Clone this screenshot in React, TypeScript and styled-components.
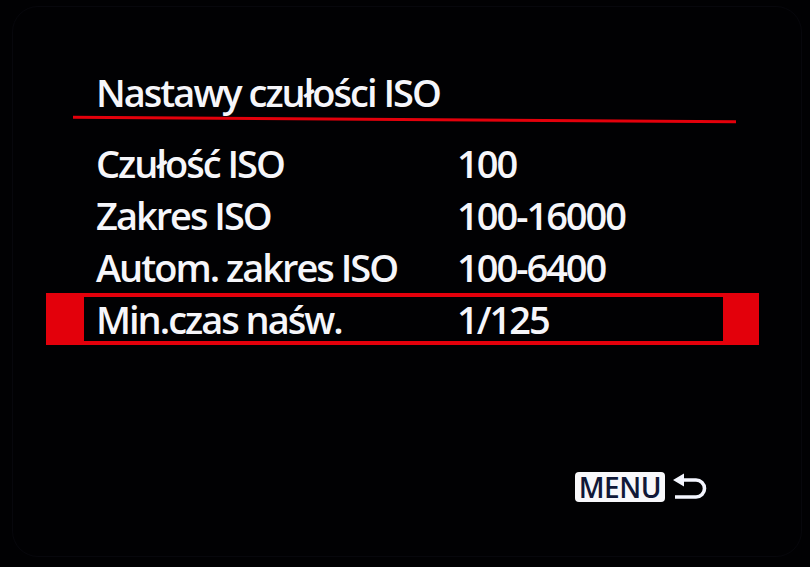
import styled, { createGlobalStyle } from "styled-components"

const GlobalStyle = createGlobalStyle`
    html, body {
        margin: 0;
        padding: 0;
        background: #000;
    }
`

const Screen = styled.div`
    width: 810px;
    height: 567px;
    box-sizing: border-box;
    padding: 6px 8px 10px 12px;
    background: #010103;
    font-family: "Open Sans", "Noto Sans", sans-serif;
    font-stretch: 88%;
    color: #f6f6fa;
    overflow: hidden;
`

const Bezel = styled.div`
    height: 100%;
    box-sizing: border-box;
    border: 1px solid #07070c;
    border-radius: 26px;
    display: flex;
    flex-direction: column;
    padding-top: 61px;
`

const Title = styled.h1`
    margin: 0 0 2px 83px;
    font-size: 38px;
    font-weight: 600;
    line-height: 48px;
    letter-spacing: -2px;
`

const Rule = styled.div`
    margin: 0 0 0 60px;
    width: 663px;
    height: 3px;
    background: #e3000b;
    transform: rotate(0.4deg);
`

const List = styled.div`
    margin-top: 16px;
    display: flex;
    flex-direction: column;
`

const Row = styled.div<{ selected?: boolean }>`
    margin-left: 33px;
    width: 713px;
    height: 52px;
    box-sizing: border-box;
    display: flex;
    align-items: center;
    border-style: solid;
    border-width: 4px 36px 4px 38px;
    border-color: ${props => props.selected ? '#e3000b' : 'transparent'};
    padding-left: 12px;
    font-size: 38px;
    font-weight: 600;
    letter-spacing: -2px;
`

const Label = styled.span`
    width: 361px;
`

const Value = styled.span``

const Footer = styled.div`
    margin-top: auto;
    margin-bottom: 54px;
    display: flex;
    justify-content: flex-end;
    align-items: center;
    gap: 7px;
    padding-right: 93px;
`

const MenuBadge = styled.span`
    height: 30px;
    width: 90px;
    box-sizing: border-box;
    border-radius: 4px;
    background: #f8f8fb;
    color: #101838;
    font-size: 28px;
    font-weight: 600;
    line-height: 31px;
    letter-spacing: -0.4px;
    text-align: center;
`

const BackIcon = () => (
    <svg width="36" height="28" viewBox="0 0 36 28" fill="none">
        <path d="M1 7 L12 0.5 L12 13.5 Z" fill="#f4f6ff" />
        <path
            d="M11 7 H24 A8.5 8.5 0 0 1 24 24 H3"
            stroke="#f4f6ff"
            strokeWidth="3.6"
            strokeLinecap="butt"
        />
    </svg>
)

const rows = [
    { label: "Czułość ISO", value: "100" },
    { label: "Zakres ISO", value: "100-16000" },
    { label: "Autom. zakres ISO", value: "100-6400" },
    { label: "Min.czas naśw.", value: "1/125", selected: true },
]

const App = () => {
    return (
        <Screen>
            <GlobalStyle />
            <Bezel>
                <Title>Nastawy czułości ISO</Title>
                <Rule />
                <List>
                    {rows.map(row => (
                        <Row key={row.label} selected={row.selected}>
                            <Label>{row.label}</Label>
                            <Value>{row.value}</Value>
                        </Row>
                    ))}
                </List>
                <Footer>
                    <MenuBadge>MENU</MenuBadge>
                    <BackIcon />
                </Footer>
            </Bezel>
        </Screen>
    )
}

export default App
